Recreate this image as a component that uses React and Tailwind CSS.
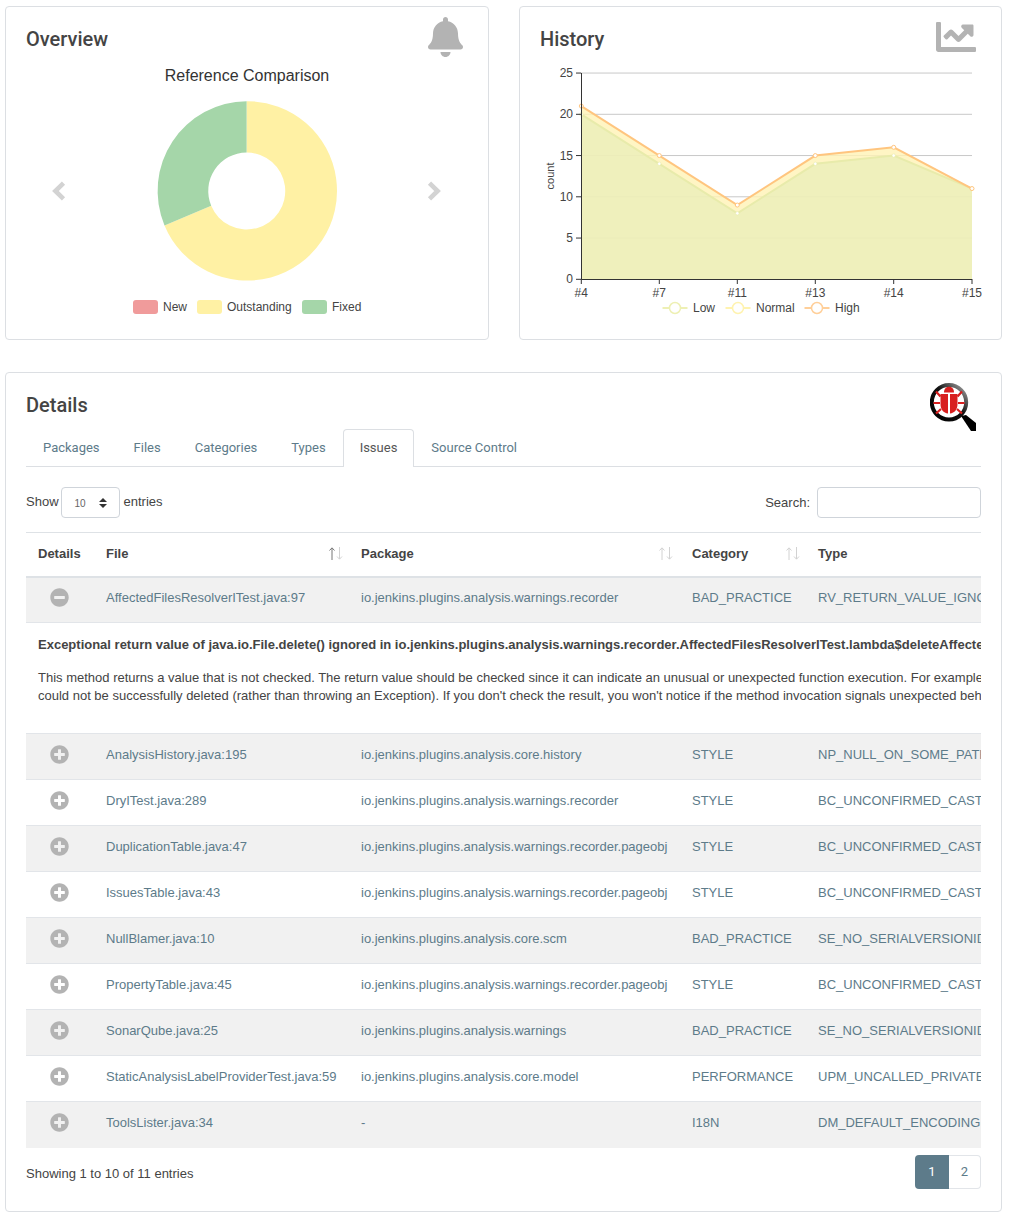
import { FaBell, FaChartLine, FaMinusCircle, FaPlusCircle } from 'react-icons/fa';

const tabs = ['Packages', 'Files', 'Categories', 'Types', 'Issues', 'Source Control'];

const rows = [
  ['AnalysisHistory.java:195', 'io.jenkins.plugins.analysis.core.history', 'STYLE', 'NP_NULL_ON_SOME_PATH_FROM_RETURN_VALUE'],
  ['DryITest.java:289', 'io.jenkins.plugins.analysis.warnings.recorder', 'STYLE', 'BC_UNCONFIRMED_CAST_OF_RETURN_VALUE'],
  ['DuplicationTable.java:47', 'io.jenkins.plugins.analysis.warnings.recorder.pageobj', 'STYLE', 'BC_UNCONFIRMED_CAST_OF_RETURN_VALUE'],
  ['IssuesTable.java:43', 'io.jenkins.plugins.analysis.warnings.recorder.pageobj', 'STYLE', 'BC_UNCONFIRMED_CAST_OF_RETURN_VALUE'],
  ['NullBlamer.java:10', 'io.jenkins.plugins.analysis.core.scm', 'BAD_PRACTICE', 'SE_NO_SERIALVERSIONID'],
  ['PropertyTable.java:45', 'io.jenkins.plugins.analysis.warnings.recorder.pageobj', 'STYLE', 'BC_UNCONFIRMED_CAST_OF_RETURN_VALUE'],
  ['SonarQube.java:25', 'io.jenkins.plugins.analysis.warnings', 'BAD_PRACTICE', 'SE_NO_SERIALVERSIONID'],
  ['StaticAnalysisLabelProviderTest.java:59', 'io.jenkins.plugins.analysis.core.model', 'PERFORMANCE', 'UPM_UNCALLED_PRIVATE_METHOD'],
  ['ToolsLister.java:34', '-', 'I18N', 'DM_DEFAULT_ENCODING'],
];

// x positions of the builds and the stacked counts of the history chart
const xs = [581.3, 659.3, 737.3, 815.3, 893.7, 972];
const labels = ['#4', '#7', '#11', '#13', '#14', '#15'];
const low = [20, 14, 8, 14, 15, 11];
const high = [21, 15, 9, 15, 16, 11];
const yFor = (v) => 279.3 - v * 8.25;
const line = (vals) => vals.map((v, i) => `${xs[i]},${yFor(v)}`).join(' ');

function Card({ title, icon, className, children }) {
  return (
    <div className={`border border-[#dcdfe3] rounded-[4px] bg-white ${className}`}>
      <div className="flex justify-between items-start pt-[10px] pl-5 pr-[25px] h-[50px]">
        <h2 className="mt-[9px] text-[20px] leading-[26px] font-medium text-[#444] font-['Roboto',sans-serif]">{title}</h2>
        {icon}
      </div>
      {children}
    </div>
  );
}

function Chevron({ flip }) {
  return (
    <svg width="14" height="20" viewBox="0 0 14 20" className={flip ? 'rotate-180' : ''}>
      <path d="M11.5 2.2L3.4 10L11.5 17.8" fill="none" stroke="#d3d3d3" strokeWidth="4.6" />
    </svg>
  );
}

function DonutChart() {
  return (
    <svg width="361" height="268" viewBox="66 57 361 268" className="block font-['Liberation_Sans',sans-serif]">
      <text x="247" y="81" textAnchor="middle" fontSize="16" fill="#333">Reference Comparison</text>
      <g transform="translate(-0.4 0)">
        <path d="M247 101.2A89.7 89.7 0 1 1 164.9 225.4L211.6 205.8A38.5 38.5 0 1 0 247 152.5Z" fill="#fff1a4" />
        <path d="M247 101.2A89.7 89.7 0 0 0 164.9 225.4L211.6 205.8A38.5 38.5 0 0 1 247 152.5Z" fill="#a5d6a9" />
      </g>
      <rect x="133" y="300" width="25" height="14" rx="3" fill="#f09b9b" />
      <text x="163" y="311" fontSize="12" fill="#444">New</text>
      <rect x="197" y="300" width="25" height="14" rx="3" fill="#fff1a4" />
      <text x="227" y="311" fontSize="12" fill="#444">Outstanding</text>
      <rect x="302" y="300" width="25" height="14" rx="3" fill="#a5d6a9" />
      <text x="332" y="311" fontSize="12" fill="#444">Fixed</text>
    </svg>
  );
}

function LegendMark({ x, color }) {
  return (
    <g>
      <line x1={x - 12.5} x2={x + 12.5} y1="308" y2="308" stroke={color} strokeWidth="2" />
      <circle cx={x} cy="308" r="5.5" fill="#fff" stroke={color} strokeWidth="1.5" />
    </g>
  );
}

function HistoryChart() {
  return (
    <svg width="441" height="268" viewBox="540 57 441 268" className="block overflow-visible font-['Liberation_Sans',sans-serif]">
      {[5, 10, 15, 20, 25].map((v) => (
        <line key={v} x1="581" x2="972" y1={yFor(v)} y2={yFor(v)} stroke="#c8c8c8" />
      ))}
      <polygon points={`${line(high)} 972,279.3 581.3,279.3`} fill="#fff3b5" fillOpacity="0.8" />
      <polygon points={`${line(low)} 972,279.3 581.3,279.3`} fill="#e6edb9" fillOpacity="0.65" />
      <polyline points={line(low)} fill="none" stroke="#e8ebab" strokeWidth="2" />
      <polyline points={line(high)} fill="none" stroke="#ffc57f" strokeWidth="2" />
      {low.map((v, i) => (
        <circle key={i} cx={xs[i]} cy={yFor(v)} r="1.7" fill="#fff" stroke="#e8ebab" strokeWidth="0.6" />
      ))}
      {high.map((v, i) => (
        <circle key={i} cx={xs[i]} cy={yFor(v)} r="2" fill="#fff" stroke="#ffc57f" />
      ))}
      <path d="M581.5 73V279.5H972" fill="none" stroke="#333" />
      {[0, 5, 10, 15, 20, 25].map((v) => (
        <g key={v}>
          <line x1="576" x2="581" y1={yFor(v)} y2={yFor(v)} stroke="#333" />
          <text x="573" y={yFor(v) + 4} textAnchor="end" fontSize="12" fill="#444">{v}</text>
        </g>
      ))}
      {labels.map((l, i) => (
        <g key={l}>
          <line x1={xs[i]} x2={xs[i]} y1="279" y2="284" stroke="#333" />
          <text x={xs[i]} y="297" textAnchor="middle" fontSize="12" fill="#444">{l}</text>
        </g>
      ))}
      <text transform="translate(554 176) rotate(-90)" textAnchor="middle" fontSize="11" fill="#444">count</text>
      <LegendMark x={675} color="#eef0b4" />
      <text x="693" y="312" fontSize="12" fill="#444">Low</text>
      <LegendMark x={738} color="#fff3b0" />
      <text x="756" y="312" fontSize="12" fill="#444">Normal</text>
      <LegendMark x={817} color="#ffcf99" />
      <text x="835" y="312" fontSize="12" fill="#444">High</text>
    </svg>
  );
}

function BugIcon() {
  return (
    <svg width="46" height="48" viewBox="0 0 46 48">
      <defs>
        <linearGradient id="ring" x1="0" y1="1" x2="1" y2="0">
          <stop offset="0" stopColor="#000" />
          <stop offset="0.55" stopColor="#111" />
          <stop offset="0.85" stopColor="#777" />
          <stop offset="1" stopColor="#aaa" />
        </linearGradient>
      </defs>
      <path d="M31 33L36 32L46 40V48H41Z" fill="#000" />
      <circle cx="19" cy="19.3" r="17.2" fill="#fff" stroke="url(#ring)" strokeWidth="4" />
      <g fill="#d81f1f">
        <path d="M14 9.5C14 5.5 16.5 3.8 19 3.8S24 5.5 24 9.5Z" />
        <path d="M10.5 11H18V30.5C13.5 30 10.5 26.5 10.5 21Z" />
        <path d="M27.5 11H20V30.5C24.5 30 27.5 26.5 27.5 21Z" />
      </g>
      <path d="M10.5 13.5L6 8.5M27.5 13.5L32 8.5M10 20H3.5M28 20H34.5M11 26L6 30.5M27 26L32 30.5" stroke="#d81f1f" strokeWidth="2.2" fill="none" />
    </svg>
  );
}

function SortArrows({ active }) {
  return (
    <svg width="14" height="13" viewBox="0 0 14 13" fill="none">
      <path d="M3 13V1M0.5 3.5L3 0.8L5.5 3.5" stroke={active ? '#777' : '#d2d2d2'} />
      <path d="M10.5 0V12M8 9.5L10.5 12.2L13 9.5" stroke="#d2d2d2" />
    </svg>
  );
}

function IssueRow({ cells, shaded }) {
  return (
    <tr className={`h-[46px] border-t border-[#e2e5e9] text-[#5d7b8a] ${shaded ? 'bg-[#f1f1f1]' : 'bg-white'}`}>
      <td className="px-3 pb-[4px]">
        <FaPlusCircle className="ml-3 text-[19px] text-[#b3b3b3]" />
      </td>
      {cells.map((c, i) => (
        <td key={i} className="px-3 pb-[4px] whitespace-nowrap">{c}</td>
      ))}
    </tr>
  );
}

export default function App() {
  return (
    <div className="w-[1009px] h-[1220px] bg-white pt-[6px] pl-[5px] text-[13px] text-[#444] font-['Liberation_Sans',sans-serif]">
      <div className="flex gap-[30px] w-[997px]">
        <Card
          title="Overview"
          className="w-[484px] h-[334px]"
          icon={<FaBell className="text-[#b3b3b3] w-[35px] h-[40px]" />}
        >
          <div className="flex items-center justify-between pl-[46px] pr-[47px]">
            <Chevron />
            <DonutChart />
            <Chevron flip />
          </div>
        </Card>
        <Card
          title="History"
          className="w-[483px] h-[334px]"
          icon={<FaChartLine className="text-[#b3b3b3] w-[40px] h-[40px]" />}
        >
          <div className="pl-5">
            <HistoryChart />
          </div>
        </Card>
      </div>

      <div className="mt-[32px] w-[997px] h-[840px] border border-[#dcdfe3] rounded-[4px] px-5">
        <div className="flex justify-between items-start h-[56px] pr-[5px]">
          <h2 className="mt-[19px] text-[20px] leading-[26px] font-medium text-[#444] font-['Roboto',sans-serif]">Details</h2>
          <div className="mt-[10px]">
            <BugIcon />
          </div>
        </div>

        <ul className="flex h-[38px] border-b border-[#dcdfe3] font-['Roboto',sans-serif]">
          {tabs.map((t) => (
            <li
              key={t}
              className={
                t === 'Issues'
                  ? 'h-[38px] px-4 leading-[36px] border border-b-0 border-[#dcdfe3] rounded-t-[4px] bg-white text-[#555]'
                  : 'h-[37px] px-[17px] leading-[37px] text-[#5d7b8a]'
              }
            >
              {t}
            </li>
          ))}
        </ul>

        <div className="flex justify-between items-center mt-5 h-[31px]">
          <div className="flex items-center">
            <span className="-mt-[1px]">Show</span>
            <div className="flex items-center justify-between w-[59px] h-[31px] ml-[2px] mr-[4px] pl-[13px] pr-[12px] pt-[1px] border border-[#cfd4da] rounded-[4px] text-[10px] text-[#666]">
              10
              <svg width="8" height="10" viewBox="0 0 8 10" fill="#333">
                <path d="M0 4L4 0L8 4ZM0 6H8L4 10Z" />
              </svg>
            </div>
            <span className="-mt-[1px]">entries</span>
          </div>
          <div className="flex items-center">
            <span className="mr-[7px] pt-[1px]">Search:</span>
            <div className="w-[164px] h-[31px] border border-[#cfd4da] rounded-[4px]" />
          </div>
        </div>

        <div className="mt-[14px] w-[955px] overflow-hidden">
          <table className="w-[1100px] table-fixed text-left">
            <colgroup>
              <col className="w-[68px]" />
              <col className="w-[255px]" />
              <col className="w-[331px]" />
              <col className="w-[126px]" />
              <col className="w-[320px]" />
            </colgroup>
            <thead>
              <tr className="h-[44px] border-t border-b-2 border-[#dee2e6] text-[#444]">
                <th className="px-3 pb-[2px] font-bold">Details</th>
                <th className="pl-3 pr-[6px] pb-[2px] font-bold">
                  <div className="flex justify-between items-center">File <SortArrows active /></div>
                </th>
                <th className="pl-3 pr-[7px] pb-[2px] font-bold">
                  <div className="flex justify-between items-center">Package <SortArrows /></div>
                </th>
                <th className="pl-3 pr-[6px] pb-[2px] font-bold">
                  <div className="flex justify-between items-center">Category <SortArrows /></div>
                </th>
                <th className="px-3 pb-[2px] font-bold">Type</th>
              </tr>
            </thead>
            <tbody>
              <tr className="h-[46px] bg-[#f1f1f1] text-[#5d7b8a]">
                <td className="px-3 pb-[4px]">
                  <FaMinusCircle className="ml-3 text-[19px] text-[#b3b3b3]" />
                </td>
                <td className="px-3 pb-[4px] whitespace-nowrap">AffectedFilesResolverITest.java:97</td>
                <td className="px-3 pb-[4px] whitespace-nowrap">io.jenkins.plugins.analysis.warnings.recorder</td>
                <td className="px-3 pb-[4px] whitespace-nowrap">BAD_PRACTICE</td>
                <td className="px-3 pb-[4px] whitespace-nowrap">RV_RETURN_VALUE_IGNORED_BAD_PRACTICE</td>
              </tr>
              <tr className="h-[111px] border-t border-[#e2e5e9]">
                <td colSpan={5} className="px-3 pt-[13px] align-top text-[#444] whitespace-nowrap">
                  <p className="font-bold leading-[18px]">
                    Exceptional return value of java.io.File.delete() ignored in io.jenkins.plugins.analysis.warnings.recorder.AffectedFilesResolverITest.lambda$deleteAffectedFilesInBuildFolder$0
                  </p>
                  <p className="mt-[15px] leading-[18px]">
                    This method returns a value that is not checked. The return value should be checked since it can indicate an unusual or unexpected function execution. For example, the File.delete() method
                  </p>
                  <p className="leading-[18px]">
                    could not be successfully deleted (rather than throwing an Exception). If you don't check the result, you won't notice if the method invocation signals unexpected behavior by returning
                  </p>
                </td>
              </tr>
              {rows.map((r, i) => (
                <IssueRow key={r[0]} cells={r} shaded={[0, 2, 4, 6, 8].includes(i)} />
              ))}
            </tbody>
          </table>
        </div>

        <div className="flex justify-between items-center mt-[7px] h-[34px]">
          <span className="pt-[4px]">Showing 1 to 10 of 11 entries</span>
          <div className="flex h-[34px] font-['Roboto',sans-serif]">
            <span className="flex items-center justify-center w-[34px] bg-[#5d7b8a] text-white rounded-l-[4px]">1</span>
            <span className="flex items-center justify-center w-[32px] border border-l-0 border-[#e2e5e9] rounded-r-[4px] text-[#5d7b8a]">2</span>
          </div>
        </div>
      </div>
    </div>
  );
}
